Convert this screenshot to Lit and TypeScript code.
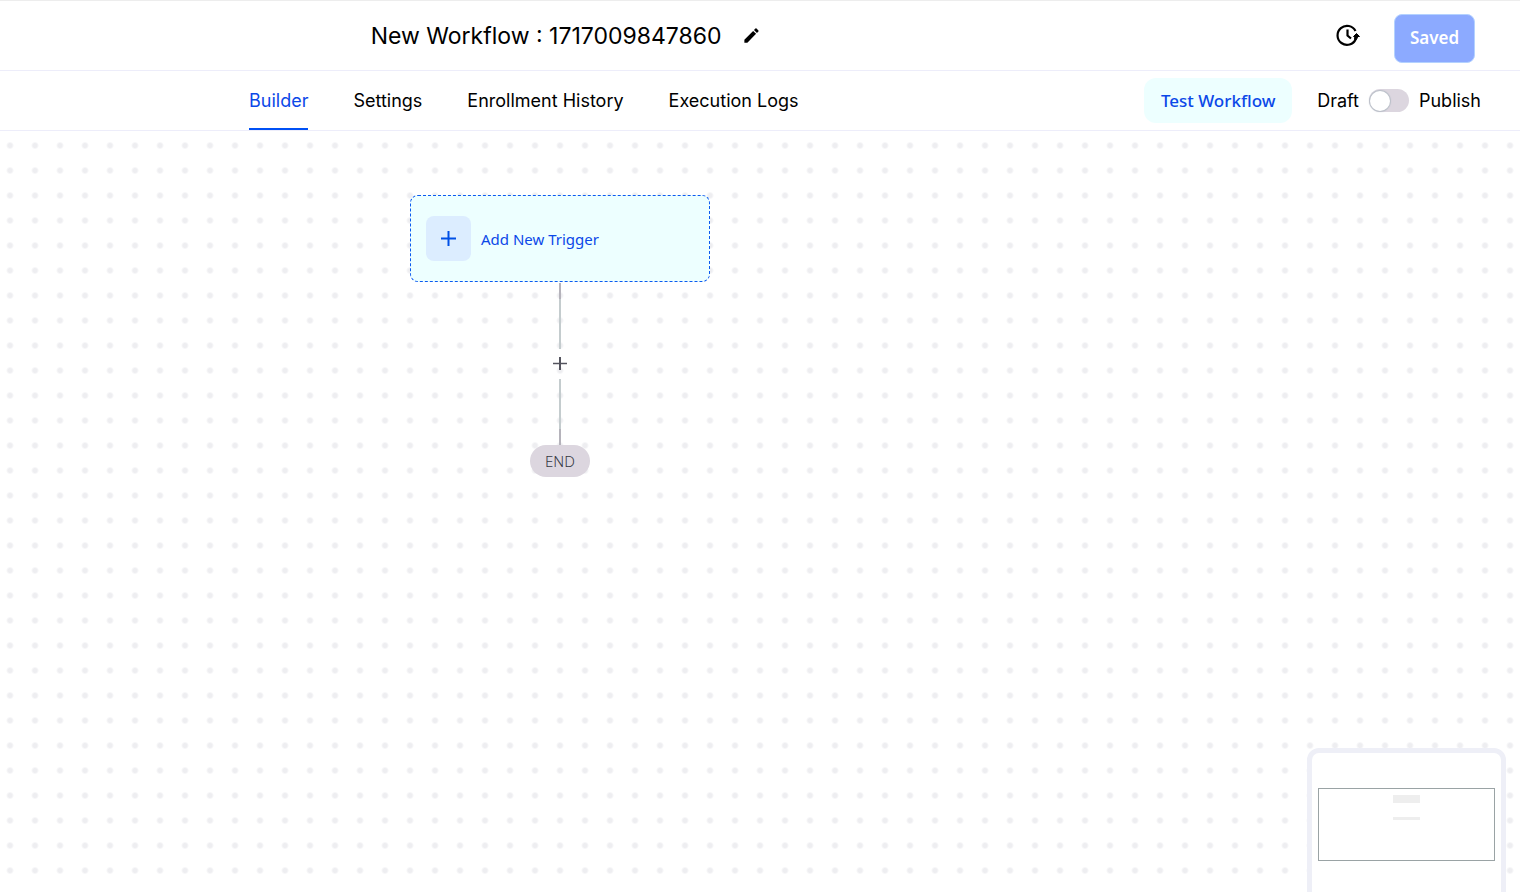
import { LitElement, html, css, svg } from "lit";
import { customElement, state } from "lit/decorators.js";

const TABS = ["Builder", "Settings", "Enrollment History", "Execution Logs"];

@customElement("app-root")
export class AppRoot extends LitElement {
  @state() private tab = "Builder";
  @state() private published = false;

  static styles = css`
    :host {
      display: flex;
      flex-direction: column;
      height: 100vh;
      overflow: hidden;
      box-sizing: border-box;
      border-top: 1px solid #ededed;
      font-family: Inter, sans-serif;
      color: #000;
      background: #fff;
    }
    * { box-sizing: border-box; }
    button {
      border: 0;
      padding: 0;
      background: none;
      font: inherit;
      color: inherit;
      cursor: pointer;
    }
    svg { display: block; }
    .top {
      flex: none;
      display: grid;
      grid-template-columns: 3fr 1fr;
      align-items: center;
      height: 70px;
      border-bottom: 1px solid #ededfa;
      padding: 0 45px 0 20px;
    }
    .title {
      display: flex;
      align-items: center;
      justify-content: center;
      gap: 20px;
    }
    h1 {
      margin: 0;
      font-size: 23px;
      line-height: 32px;
      font-weight: 400;
    }
    .actions {
      display: flex;
      align-items: center;
      justify-content: flex-end;
      gap: 33px;
    }
    .saved {
      width: 81px;
      height: 49px;
      margin-top: 5px;
      border: 1px solid #b4d2ff;
      border-radius: 8px;
      background: #8caaff;
      color: #fff;
      font: 600 17px/24px "Noto Sans", sans-serif;
    }
    .bar {
      flex: none;
      display: flex;
      align-items: center;
      justify-content: space-between;
      height: 60px;
      padding: 0 39px 0 249px;
      border-bottom: 1px solid #ededfa;
      font-size: 18px;
      line-height: 24px;
    }
    .tabs {
      display: flex;
      align-self: stretch;
      gap: 45px;
    }
    .tab { border-bottom: 2px solid transparent; border-top: 2px solid transparent; }
    .tab.active { color: #0b48e8; border-bottom-color: #0050f5; }
    .right { display: flex; align-items: center; }
    .test {
      width: 148px;
      height: 45px;
      margin-right: 25px;
      border-radius: 12px;
      background: #edffff;
      color: #0b48e8;
      font: 500 17px/24px "Noto Sans", sans-serif;
    }
    .switch { display: flex; align-items: center; gap: 10px; cursor: pointer; }
    .switch input {
      appearance: none;
      display: flex;
      align-items: center;
      width: 40px;
      height: 23px;
      margin: 0;
      padding: 1px;
      border-radius: 12px;
      background: #dcd6df;
      cursor: pointer;
    }
    .switch input::before {
      content: "";
      width: 20px;
      height: 20px;
      border-radius: 50%;
      background: #fff;
      box-shadow: 0 0 1px 1px #b9bfc8;
    }
    .switch input:checked { background: #0050f5; justify-content: flex-end; }
    .canvas {
      position: relative;
      flex: 1;
      min-height: 0;
      background: radial-gradient(circle at 13px 50%, #eeeef1 0, #eeeef1 2px, transparent 4px) -3px 2px / 25px 25px;
    }
    .flow {
      position: absolute;
      left: 410px;
      top: 64px;
      width: 300px;
      display: flex;
      flex-direction: column;
      align-items: center;
    }
    .trigger {
      display: flex;
      align-items: center;
      gap: 10px;
      width: 100%;
      height: 87px;
      padding: 0 15px;
      border: 1px dashed #0b5af0;
      border-radius: 8px;
      background: #edffff;
      color: #0b48e8;
      font: 400 15px/20px "Noto Sans", sans-serif;
    }
    .plus {
      display: grid;
      place-items: center;
      width: 45px;
      height: 45px;
      border-radius: 8px;
      background: #dcedff;
    }
    .line { width: 2px; height: 66px; background: #c4ccce; }
    .line.first { margin-top: 1px; background: linear-gradient(#b5b3bb 16px, #c4ccce 16px); }
    .line.last { background: linear-gradient(#c4ccce 50px, #b5b3bb 50px); }
    .add { display: grid; place-items: center; width: 30px; height: 30px; }
    .end {
      width: 60px;
      border-radius: 16px;
      background: #dcd6df;
      color: #343842;
      font: 300 15px/32px "Noto Sans", sans-serif;
      text-align: center;
    }
    .map {
      position: absolute;
      right: 14px;
      bottom: -12px;
      width: 199px;
      border: 5px solid #eeeff7;
      border-radius: 12px;
      background: #fff;
    }
    .map svg { width: 100%; }
  `;

  render() {
    return html`
      <header class="top">
        <div class="title">
          <h1>New Workflow : 1717009847860</h1>
          <button aria-label="Rename workflow">
            <svg width="19" height="19" viewBox="0 0 24 24">
              <path d="M3 17.250V21h3.750L17.800 9.940l-3.750-3.750zM20.710 7.040a1 1 0 0 0 0-1.410l-2.340-2.340a1 1 0 0 0-1.410 0l-1.830 1.830 3.750 3.750z"/>
            </svg>
          </button>
        </div>
        <div class="actions">
          <button aria-label="Version history">
            <svg width="26" height="26" viewBox="0 0 26 26" fill="none" stroke="#000" stroke-width="2.200">
              <path d="M20.500 8A9.500 9.500 0 1 0 20.800 16"/>
              <path d="M12.500 6.500v6l3.500 3"/>
              <path d="M18.500 13.500h6l-3-3zM19.800 13.500h3l-1.300 3h-2z" fill="#000" stroke-width="1"/>
            </svg>
          </button>
          <button class="saved">Saved</button>
        </div>
      </header>
      <div class="bar">
        <nav class="tabs">
          ${TABS.map((t) => html`<button class="tab ${this.tab === t ? "active" : ""}" @click=${() => (this.tab = t)}>${t}</button>`)}
        </nav>
        <div class="right">
          <button class="test">Test Workflow</button>
          <label class="switch">
            <span>Draft</span>
            <input type="checkbox" role="switch" .checked=${this.published}
              @change=${(e: Event) => (this.published = (e.target as HTMLInputElement).checked)} />
            <span>Publish</span>
          </label>
        </div>
      </div>
      <main class="canvas">
        <div class="flow">
          <button class="trigger">
            <span class="plus">
              <svg width="15" height="15" stroke="#0050e6" stroke-width="2"><path d="M7.500 0v15M0 7.500h15"/></svg>
            </span>
            Add New Trigger
          </button>
          <div class="line first"></div>
          <button class="add" aria-label="Add step">
            <svg width="14" height="14" stroke="#54545e" stroke-width="2"><path d="M7 0v13"/><path d="M0 6.500h14" stroke-width="1.500"/></svg>
          </button>
          <div class="line last"></div>
          <div class="end">END</div>
        </div>
        <div class="map">
          <svg viewBox="0 0 189 146" role="img" aria-label="Minimap">
            ${svg`
              <rect x="6.500" y="35.500" width="176" height="72" fill="none" stroke="#9aa3a5"/>
              <rect x="81" y="42" width="27" height="8" fill="#eee"/>
              <rect x="81" y="64" width="27" height="3" fill="#eee"/>
            `}
          </svg>
        </div>
      </main>
    `;
  }
}
